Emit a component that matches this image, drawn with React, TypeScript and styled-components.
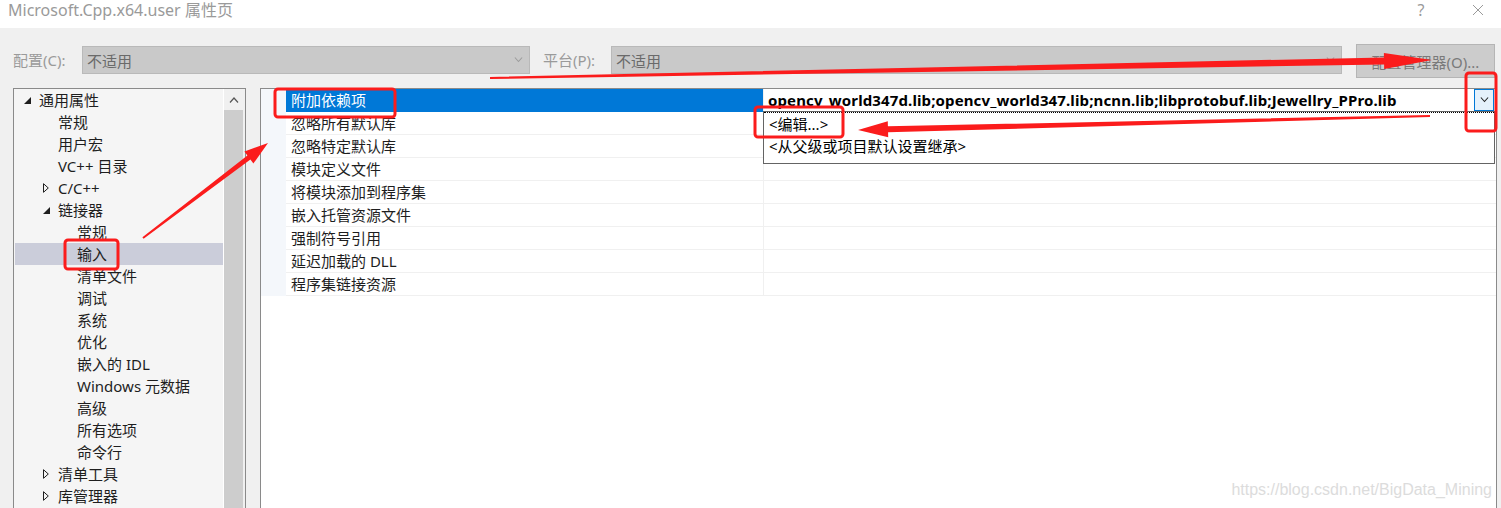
import React from 'react';
import styled, { createGlobalStyle } from 'styled-components';

const GlobalStyle = createGlobalStyle`
  html, body {
    margin: 0;
    padding: 0;
    background: #f0f0f0;
  }
  body {
    font-family: 'Noto Sans', 'Noto Sans CJK SC', sans-serif;
    color: #1e1e1e;
  }
  * { box-sizing: border-box; }
`;

const Window = styled.div`
  position: relative;
  width: 1501px;
  height: 508px;
  overflow: hidden;
  background: #f0f0f0;
  display: flex;
  flex-direction: column;
`;

const TitleBar = styled.div`
  flex: none;
  height: 28px;
  background: #fff;
  display: flex;
  align-items: flex-start;
  padding-left: 8px;
  color: #9a9a9a;
  font-size: 16px;
  line-height: 20px;
`;

const Title = styled.div`
  flex: 1;
`;

const TitleButton = styled.div`
  width: 46px;
  height: 20px;
  display: flex;
  align-items: center;
  justify-content: center;
  color: #9a9a9a;
  & + & { margin-left: 11px; }
`;

const Toolbar = styled.div`
  flex: none;
  height: 60px;
  display: flex;
  align-items: flex-start;
  padding: 16px 0 0 13px;
`;

const Label = styled.div<{ $w: number; $gap?: number }>`
  width: ${p => p.$w}px;
  margin: 2px 0 0 ${p => p.$gap ?? 0}px;
  height: 28px;
  line-height: 28px;
  font-size: 15px;
  color: #9a9a9a;
`;

const Select = styled.div<{ $w: number }>`
  width: ${p => p.$w}px;
  height: 28px;
  margin-top: 2px;
  background: #c9c9c9;
  border: 1px solid #b9b9b9;
  display: flex;
  align-items: center;
  padding: 0 6px 0 4px;
  font-size: 15px;
  color: #6a6a6a;
  span { flex: 1; }
`;

const ManagerButton = styled.div`
  width: 139px;
  height: 34px;
  margin-left: 14px;
  background: #cccccc;
  border: 1px solid #b5b5b5;
  display: flex;
  align-items: center;
  justify-content: center;
  font-size: 15px;
  color: #7a7a7a;
`;

const Body = styled.div`
  flex: 1;
  display: flex;
  gap: 14px;
  padding-left: 13px;
  min-height: 0;
`;

const Tree = styled.div`
  width: 233px;
  flex: none;
  border: 1px solid #8a8a8a;
  border-bottom: none;
  background: #f5f5f5;
  display: flex;
`;

const TreeList = styled.div`
  width: 209px;
  padding-left: 1px;
`;

const TreeRow = styled.div<{ $level: number; $selected?: boolean }>`
  height: 22px;
  display: flex;
  align-items: center;
  padding-left: ${p => 8 + 19 * p.$level}px;
  background: ${p => (p.$selected ? '#cbcdda' : 'transparent')};
  font-size: 15px;
  line-height: 22px;
  color: #1e1e1e;
  white-space: nowrap;
`;

const Expander = styled.div`
  width: 16px;
  height: 22px;
  flex: none;
  display: flex;
  align-items: center;
  padding-left: 1px;
`;

const ScrollBar = styled.div`
  width: 22px;
  flex: none;
  border-left: 1px solid #fff;
  background: #f0f0f0;
  display: flex;
  flex-direction: column;
`;

const ScrollArrow = styled.div`
  height: 21px;
  flex: none;
  display: flex;
  align-items: center;
  justify-content: center;
  padding-right: 2px;
`;

const ScrollThumb = styled.div`
  flex: 1;
  width: 19px;
  background: #cdcdcd;
`;

const Grid = styled.div`
  width: 1237px;
  flex: none;
  border: 1px solid #8a8a8a;
  border-bottom: none;
  background: #fff;
`;

const GridRow = styled.div`
  position: relative;
  display: flex;
  height: 23px;
`;

const Gutter = styled.div`
  width: 25px;
  flex: none;
  background: #f4f7fb;
`;

const NameCell = styled.div<{ $selected?: boolean }>`
  width: 477px;
  flex: none;
  padding-left: 5px;
  font-size: 15px;
  line-height: 22px;
  white-space: nowrap;
  color: ${p => (p.$selected ? '#fff' : '#1e1e1e')};
  background: ${p => (p.$selected ? '#0078d7' : '#fff')};
  border-bottom: 1px solid ${p => (p.$selected ? '#0078d7' : '#f0f0f0')};
`;

const ValueCell = styled.div`
  position: relative;
  flex: 1;
  display: flex;
  align-items: center;
  padding-left: 4px;
  border-left: 1px solid #f0f0f0;
  border-bottom: 1px solid #f0f0f0;
  font-size: 15px;
`;

const ValueText = styled.span<{ $bold?: boolean }>`
  flex: 1;
  font-weight: ${p => (p.$bold ? 700 : 400)};
  color: #000;
  white-space: nowrap;
  letter-spacing: 0.12px;
`;

const DropButton = styled.div`
  width: 20px;
  height: 22px;
  margin: 0 2px 1px 0;
  align-self: flex-start;
  background: #e5f1fb;
  border: 1px solid #0078d7;
  display: flex;
  align-items: center;
  justify-content: center;
`;

const DropList = styled.div`
  position: absolute;
  top: 22px;
  left: -1px;
  right: 1px;
  height: 53px;
  background: #fff;
  border: 1px solid #646464;
  z-index: 2;
`;

const DropItem = styled.div<{ $focused?: boolean }>`
  height: 22px;
  padding-left: 5px;
  font-size: 15px;
  line-height: 22px;
  color: #000;
  border-top: 1px ${p => (p.$focused ? 'dotted #000' : 'solid transparent')};
`;

const Watermark = styled.div`
  position: absolute;
  right: 9px;
  bottom: 9px;
  font-family: 'Liberation Sans', Arial, sans-serif;
  font-size: 16px;
  color: #dcdcdc;
  z-index: 3;
`;

const Overlay = styled.svg`
  position: absolute;
  left: 0;
  top: 0;
  z-index: 5;
  pointer-events: none;
`;

const Chevron = ({ up, color = '#333', w = 9 }: { up?: boolean; color?: string; w?: number }) => (
  <svg width={w} height={w / 2 + 1} viewBox="0 0 10 6">
    <path d={up ? 'M1 5.5 L5 1 L9 5.5' : 'M1 0.5 L5 5 L9 0.5'} fill="none" stroke={color} strokeWidth="1.2" />
  </svg>
);

const ExpandedIcon = () => (
  <svg width="7" height="7" viewBox="0 0 7 7">
    <path d="M7 0 L7 7 L0 7 Z" fill="#1e1e1e" />
  </svg>
);

const CollapsedIcon = () => (
  <svg width="6" height="10" viewBox="0 0 6 10">
    <path d="M0.5 0.7 L5.3 5 L0.5 9.3 Z" fill="none" stroke="#1e1e1e" strokeWidth="1" />
  </svg>
);

type TreeItem = { label: string; level: number; state?: 'open' | 'closed'; selected?: boolean };

const treeItems: TreeItem[] = [
  { label: '通用属性', level: 0, state: 'open' },
  { label: '常规', level: 1 },
  { label: '用户宏', level: 1 },
  { label: 'VC++ 目录', level: 1 },
  { label: 'C/C++', level: 1, state: 'closed' },
  { label: '链接器', level: 1, state: 'open' },
  { label: '常规', level: 2 },
  { label: '输入', level: 2, selected: true },
  { label: '清单文件', level: 2 },
  { label: '调试', level: 2 },
  { label: '系统', level: 2 },
  { label: '优化', level: 2 },
  { label: '嵌入的 IDL', level: 2 },
  { label: 'Windows 元数据', level: 2 },
  { label: '高级', level: 2 },
  { label: '所有选项', level: 2 },
  { label: '命令行', level: 2 },
  { label: '清单工具', level: 1, state: 'closed' },
  { label: '库管理器', level: 1, state: 'closed' },
];

const properties = [
  '附加依赖项',
  '忽略所有默认库',
  '忽略特定默认库',
  '模块定义文件',
  '将模块添加到程序集',
  '嵌入托管资源文件',
  '强制符号引用',
  '延迟加载的 DLL',
  '程序集链接资源',
];

type Pt = [number, number];

// tapered arrow: thin at the tail, wide head at the tip
const arrowPoints = (tail: Pt, tip: Pt, head: number, headW: number, s0: number, s1: number) => {
  const dx = tip[0] - tail[0];
  const dy = tip[1] - tail[1];
  const len = Math.hypot(dx, dy);
  const ux = dx / len;
  const uy = dy / len;
  const nx = -uy;
  const ny = ux;
  const neck: Pt = [tip[0] - ux * head, tip[1] - uy * head];
  const p = (b: Pt, k: number) => `${(b[0] + nx * k).toFixed(1)},${(b[1] + ny * k).toFixed(1)}`;
  return [
    p(tail, s0 / 2),
    p(neck, s1 / 2),
    p(neck, headW / 2),
    `${tip[0]},${tip[1]}`,
    p(neck, -headW / 2),
    p(neck, -s1 / 2),
    p(tail, -s0 / 2),
  ].join(' ');
};

const RED = '#fb1c1c';

const Annotations = () => (
  <Overlay width={1501} height={508} viewBox="0 0 1501 508">
    <g fill="none" stroke={RED} strokeWidth="3">
      <rect x="275" y="89" width="120" height="28" rx="3" />
      <rect x="65" y="240" width="53" height="29" rx="3" />
      <rect x="755" y="107" width="88" height="30" rx="3" />
      <rect x="1466" y="73" width="30" height="58" rx="3" />
    </g>
    <g fill={RED}>
      <polygon points={arrowPoints([143, 238], [268, 143], 24, 15, 2, 5)} />
      <polygon points={arrowPoints([490, 78], [1432, 60], 48, 16, 2, 7)} />
      <polygon points={arrowPoints([1430, 116], [858, 130], 30, 16, 2, 6)} />
    </g>
  </Overlay>
);

export default function App() {
  return (
    <>
      <GlobalStyle />
      <Window>
        <TitleBar>
          <Title>Microsoft.Cpp.x64.user 属性页</Title>
          <TitleButton>?</TitleButton>
          <TitleButton>
            <svg width="12" height="12" viewBox="0 0 12 12">
              <path d="M1 1 L11 11 M11 1 L1 11" stroke="#9a9a9a" strokeWidth="1" />
            </svg>
          </TitleButton>
        </TitleBar>

        <Toolbar>
          <Label $w={69}>配置(C):</Label>
          <Select $w={448}>
            <span>不适用</span>
            <Chevron color="#9c9c9c" />
          </Select>
          <Label $w={68} $gap={13}>平台(P):</Label>
          <Select $w={731}>
            <span>不适用</span>
            <Chevron color="#9c9c9c" />
          </Select>
          <ManagerButton>配置管理器(O)...</ManagerButton>
        </Toolbar>

        <Body>
          <Tree>
            <TreeList>
              {treeItems.map((item, i) => (
                <TreeRow key={i} $level={item.level} $selected={item.selected}>
                  <Expander>
                    {item.state === 'open' && <ExpandedIcon />}
                    {item.state === 'closed' && <CollapsedIcon />}
                  </Expander>
                  {item.label}
                </TreeRow>
              ))}
            </TreeList>
            <ScrollBar>
              <ScrollArrow>
                <Chevron up color="#555" w={10} />
              </ScrollArrow>
              <ScrollThumb />
            </ScrollBar>
          </Tree>

          <Grid>
            {properties.map((name, i) => (
              <GridRow key={name}>
                <Gutter />
                <NameCell $selected={i === 0}>{name}</NameCell>
                <ValueCell>
                  {i === 0 && (
                    <>
                      <ValueText $bold>
                        opencv_world347d.lib;opencv_world347.lib;ncnn.lib;libprotobuf.lib;Jewellry_PPro.lib
                      </ValueText>
                      <DropButton>
                        <Chevron color="#222" w={9} />
                      </DropButton>
                      <DropList>
                        <DropItem $focused>&lt;编辑...&gt;</DropItem>
                        <DropItem>&lt;从父级或项目默认设置继承&gt;</DropItem>
                      </DropList>
                    </>
                  )}
                </ValueCell>
              </GridRow>
            ))}
          </Grid>
        </Body>

        <Watermark>https://blog.csdn.net/BigData_Mining</Watermark>
        <Annotations />
      </Window>
    </>
  );
}
